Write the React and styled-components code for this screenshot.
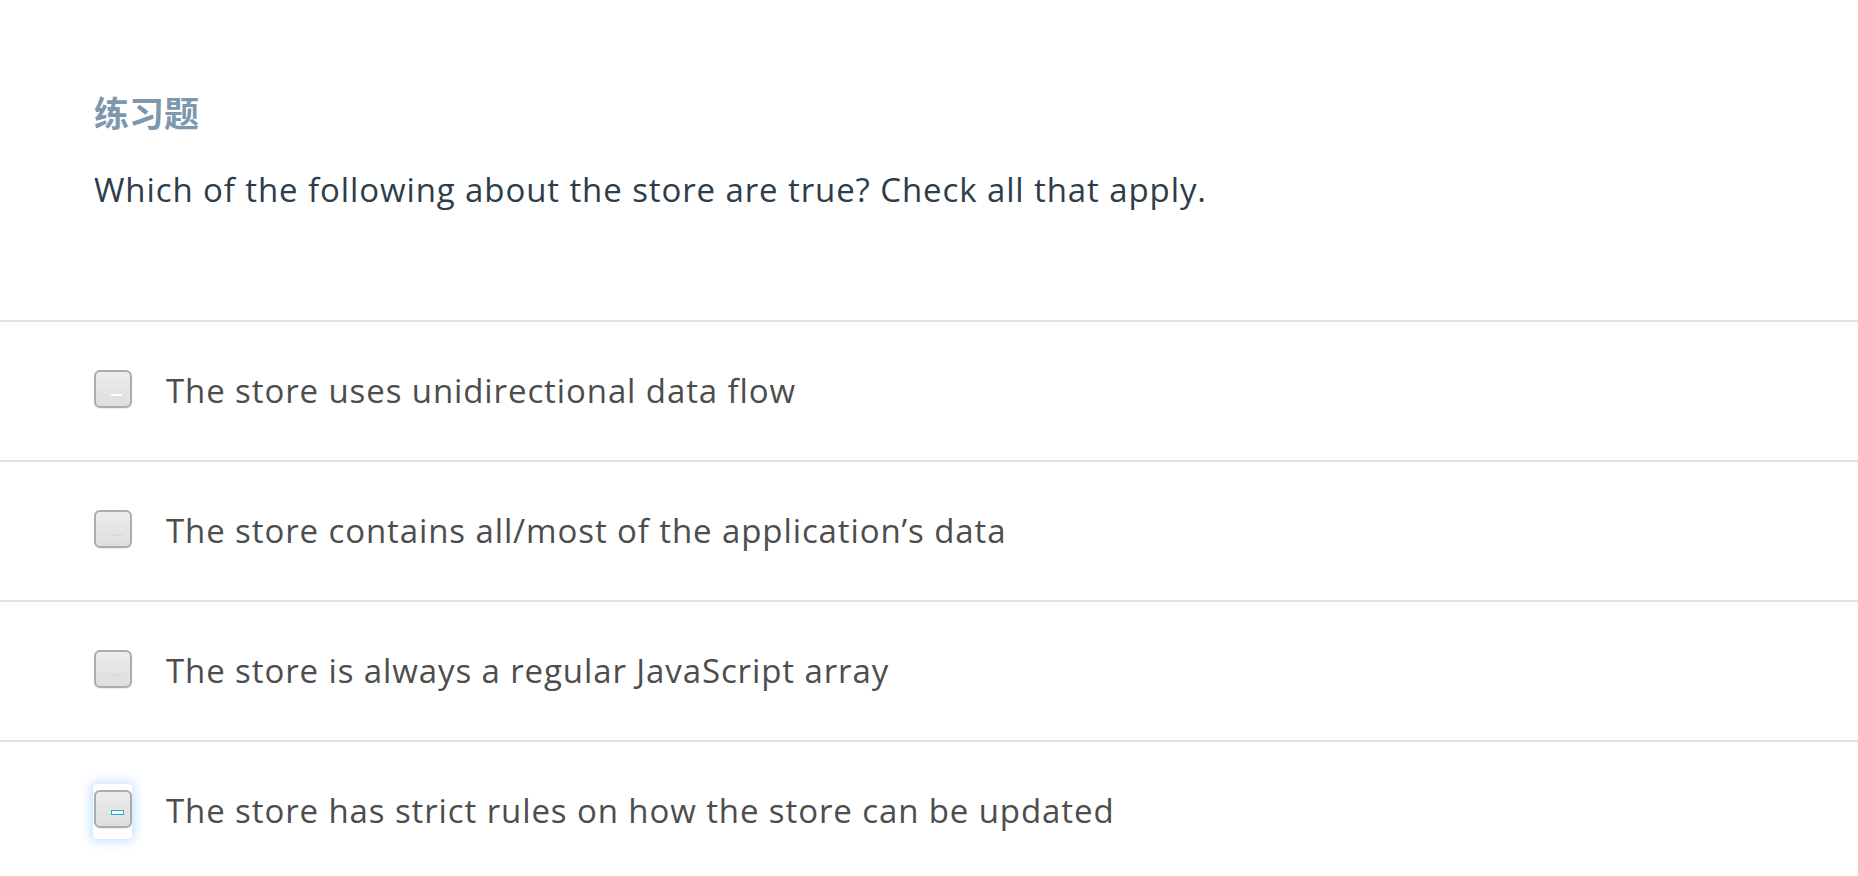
import React from "react";
import styled, { createGlobalStyle } from "styled-components";

const GlobalStyle = createGlobalStyle`
  html, body {
    margin: 0;
    padding: 0;
    background: #ffffff;
  }
  body {
    font-family: "Open Sans", "Noto Sans CJK SC", sans-serif;
  }
`;

const Page = styled.div`
  width: 100%;
  overflow: hidden;
`;

const Prompt = styled.header`
  padding: 91px 94px 106px;
`;

const Title = styled.h2`
  margin: 0 0 34px;
  font-family: "Noto Sans CJK SC", "Noto Sans", sans-serif;
  font-size: 35px;
  line-height: 41px;
  font-weight: 700;
  color: #7d97ad;
`;

const Question = styled.p`
  margin: 0;
  font-size: 33px;
  letter-spacing: 0.9px;
  line-height: 48px;
  color: #2e3d49;
`;

const Options = styled.ul`
  list-style: none;
  margin: 0;
  padding: 0;
`;

const Row = styled.li`
  display: flex;
  align-items: center;
  gap: 34px;
  height: 138px;
  padding: 0 94px;
  border-top: 2px solid #dbe2e8;
`;

const Focus = styled.span`
  display: flex;
  align-items: center;
  justify-content: center;
  width: 39px;
  height: 55px;
  margin-left: -1px;
  border-radius: 4px;
  background: ${(p) => (p.$focused ? "#ffffff" : "transparent")};
  box-shadow: ${(p) =>
    p.$focused ? "0 0 10px 3px rgba(120, 190, 255, 0.4)" : "none"};
`;

const Box = styled.span`
  position: relative;
  box-sizing: border-box;
  width: 38px;
  height: 38px;
  margin-bottom: 5px;
  border: 2px solid #acacac;
  border-radius: 6px;
  background: linear-gradient(#ececec, #dedede);
  box-shadow: 0 1px 1px rgba(0, 0, 0, 0.08);
`;

const Dash = styled.span`
  position: absolute;
  left: 15px;
  top: ${(p) => (p.$focused ? "18px" : "22px")};
  box-sizing: border-box;
  width: ${(p) => (p.$focused ? "13px" : "11px")};
  height: ${(p) => (p.$focused ? "5px" : "2px")};
  background: ${(p) => (p.$tone === "pale" ? "#cfdbe6" : "#ffffff")};
  border: ${(p) => (p.$focused ? "1.5px solid #1ab0dc" : "none")};
`;

const Label = styled.span`
  font-size: 33px;
  letter-spacing: 0.9px;
  line-height: 48px;
  color: #4d4d4d;
`;

const options = [
  { text: "The store uses unidirectional data flow", tone: "white" },
  { text: "The store contains all/most of the application’s data", tone: "pale" },
  { text: "The store is always a regular JavaScript array", tone: "pale" },
  { text: "The store has strict rules on how the store can be updated", tone: "white", focused: true },
];

export default function App() {
  return (
    <Page>
      <GlobalStyle />
      <Prompt>
        <Title>练习题</Title>
        <Question>Which of the following about the store are true? Check all that apply.</Question>
      </Prompt>
      <Options>
        {options.map((o) => (
          <Row key={o.text}>
            <Focus $focused={o.focused}>
              <Box>
                <Dash $tone={o.tone} $focused={o.focused} />
              </Box>
            </Focus>
            <Label>{o.text}</Label>
          </Row>
        ))}
      </Options>
    </Page>
  );
}
